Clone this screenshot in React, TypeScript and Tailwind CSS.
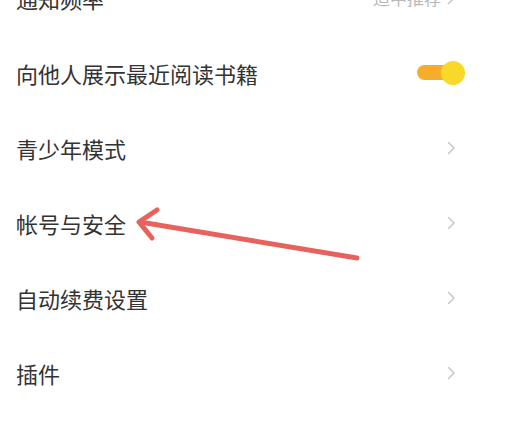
type Row = {
	label: string;
	value?: string;
	toggle?: boolean;
};

const rows: Row[] = [
	{ label: "通知频率", value: "适中推荐" },
	{ label: "向他人展示最近阅读书籍", toggle: true },
	{ label: "青少年模式" },
	{ label: "帐号与安全" },
	{ label: "自动续费设置" },
	{ label: "插件" },
];

function Chevron() {
	return (
		<svg width="9" height="14" viewBox="0 0 9 14" className="text-[#c9c9c9]">
			<path
				d="M1.5 1.5 L7 7 L1.5 12.5"
				stroke="currentColor"
				strokeWidth="1.6"
				fill="none"
				strokeLinecap="round"
				strokeLinejoin="round"
			/>
		</svg>
	);
}

function Toggle() {
	return (
		<div className="relative flex h-[24px] w-[48px] items-center">
			<div className="h-[15px] w-[44px] rounded-full bg-[#f6ad2a]" />
			<div className="absolute right-0 top-0 h-[24px] w-[24px] rounded-full bg-[#f8d92a]" />
		</div>
	);
}

export default function App() {
	return (
		<div
			className="relative h-[434px] w-[513px] overflow-hidden bg-white"
			style={{ fontFamily: '"Noto Sans CJK SC", "Noto Sans", sans-serif' }}
		>
			<div className="-mt-[40px] flex flex-col">
				{rows.map((row) => (
					<div
						key={row.label}
						className="flex h-[75px] items-center justify-between pl-[16px] pr-[57px]"
					>
						<span className="text-[22px] leading-none text-[#333333]">
							{row.label}
						</span>
						{row.toggle ? (
							<div className="-mr-[9px]">
								<Toggle />
							</div>
						) : (
							<div className="flex items-center gap-[6px]">
								{row.value && (
									<span className="text-[17px] leading-none text-[#b8b8b8]">
										{row.value}
									</span>
								)}
								<Chevron />
							</div>
						)}
					</div>
				))}
			</div>

			{/* red annotation arrow */}
			<svg
				className="absolute left-0 top-0"
				width="513"
				height="434"
				viewBox="0 0 513 434"
			>
				<g
					stroke="#e8625d"
					strokeWidth="5"
					strokeLinecap="round"
					strokeLinejoin="round"
					fill="none"
				>
					<path d="M357 258 L140 222" />
					<path d="M157 210 L139 222 L152 238" />
				</g>
			</svg>
		</div>
	);
}
